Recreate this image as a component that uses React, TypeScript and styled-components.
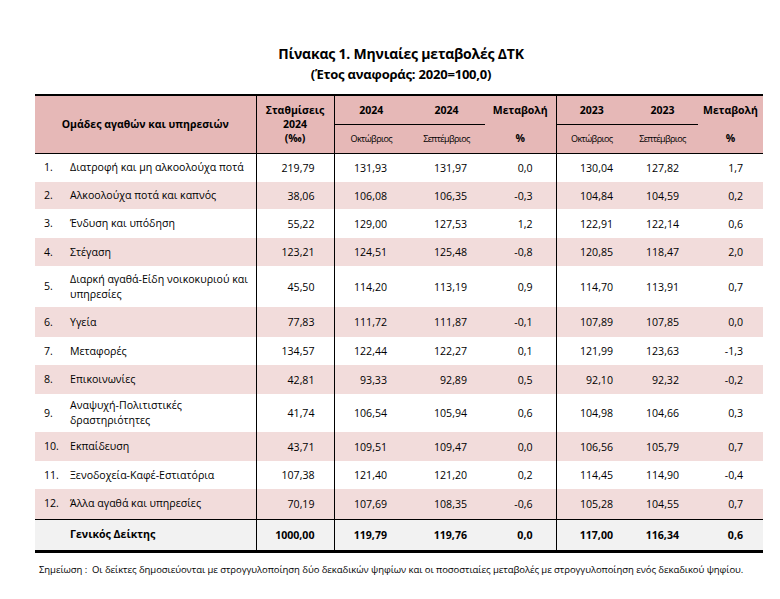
import React from "react";
import styled, { createGlobalStyle } from "styled-components";

const Global = createGlobalStyle`
  html, body { margin: 0; padding: 0; background: #fff; }
  body { font-family: "Open Sans", "Noto Sans", sans-serif; color: #000; }
`;

const Page = styled.div`
  width: 780px;
  height: 599px;
  display: flex;
  flex-direction: column;
  padding-top: 45px;
  box-sizing: border-box;
`;

const TitleBlock = styled.div`
  display: flex;
  flex-direction: column;
  align-items: center;
  gap: 3px;
  padding-left: 22px;
  margin-bottom: 11px;
`;

const Title = styled.h1`
  margin: 0;
  font-size: 14px;
  line-height: 18px;
  font-weight: 700;
  letter-spacing: -0.2px;
`;

const Subtitle = styled.h2`
  margin: 0;
  font-size: 13px;
  line-height: 17px;
  font-weight: 700;
  letter-spacing: -0.2px;
`;

const Table = styled.table`
  margin-left: 35px;
  width: 728px;
  border-collapse: collapse;
  table-layout: fixed;
  border-top: 2px solid #000;
  border-bottom: 3px solid #000;
  font-size: 10.6px;
`;

const HeadRow = styled.tr`
  background: #e6b8b7;
  height: 29px;
`;

const HeadCell = styled.th<{ $right?: boolean; $under?: boolean; $bottom?: boolean }>`
  padding: 0;
  font-weight: 700;
  font-size: 10.5px;
  line-height: 14px;
  text-align: center;
  vertical-align: middle;
  border-right: ${(p) => (p.$right ? "1px solid #000" : "none")};
  border-bottom: ${(p) => (p.$under || p.$bottom ? "1px solid #000" : "none")};
`;

const MonthCell = styled.th<{ $right?: boolean }>`
  padding: 0;
  font-weight: 500;
  font-size: 9px;
  letter-spacing: -0.6px;
  text-align: center;
  vertical-align: middle;
  border-bottom: 1px solid #000;
  border-right: ${(p) => (p.$right ? "1px solid #000" : "none")};
`;

const Row = styled.tr<{ $tint: "pink" | "white" | "gray"; $h: number }>`
  height: ${(p) => p.$h}px;
  background: ${(p) =>
    p.$tint === "pink" ? "#f2dcdb" : p.$tint === "gray" ? "#f2f2f2" : "#ffffff"};
  font-weight: ${(p) => (p.$tint === "gray" ? 700 : 400)};
  border-top: ${(p) => (p.$tint === "gray" ? "1px solid #000" : "none")};
`;

const NameCell = styled.td`
  padding: 0 6px 0 9px;
  border-right: 1px solid #000;
  vertical-align: middle;
`;

const NameWrap = styled.div`
  display: flex;
  align-items: center;
  line-height: 15px;
`;

const Num = styled.span`
  flex: 0 0 26px;
`;

const Label = styled.span`
  flex: 1;
`;

const ValueCell = styled.td<{ $pad: number; $right?: boolean }>`
  padding: 0 ${(p) => p.$pad}px 0 0;
  text-align: right;
  vertical-align: middle;
  border-right: ${(p) => (p.$right ? "1px solid #000" : "none")};
`;

const Note = styled.p`
  margin: 10px 0 0 39px;
  font-size: 9.5px;
  letter-spacing: -0.06px;
`;

const pads = [19, 21, 18, 23, 14, 19, 20];

type R = { n: string; name: string; v: string[]; h: number };

const rows: R[] = [
  { n: "1.", name: "Διατροφή και μη αλκοολούχα ποτά", v: ["219,79", "131,93", "131,97", "0,0", "130,04", "127,82", "1,7"], h: 29 },
  { n: "2.", name: "Αλκοολούχα ποτά και καπνός", v: ["38,06", "106,08", "106,35", "-0,3", "104,84", "104,59", "0,2"], h: 27 },
  { n: "3.", name: "Ένδυση και υπόδηση", v: ["55,22", "129,00", "127,53", "1,2", "122,91", "122,14", "0,6"], h: 29 },
  { n: "4.", name: "Στέγαση", v: ["123,21", "124,51", "125,48", "-0,8", "120,85", "118,47", "2,0"], h: 28 },
  { n: "5.", name: "Διαρκή αγαθά-Είδη νοικοκυριού και υπηρεσίες", v: ["45,50", "114,20", "113,19", "0,9", "114,70", "113,91", "0,7"], h: 41 },
  { n: "6.", name: "Υγεία", v: ["77,83", "111,72", "111,87", "-0,1", "107,89", "107,85", "0,0"], h: 30 },
  { n: "7.", name: "Μεταφορές", v: ["134,57", "122,44", "122,27", "0,1", "121,99", "123,63", "-1,3"], h: 28 },
  { n: "8.", name: "Επικοινωνίες", v: ["42,81", "93,33", "92,89", "0,5", "92,10", "92,32", "-0,2"], h: 29 },
  { n: "9.", name: "Αναψυχή-Πολιτιστικές δραστηριότητες", v: ["41,74", "106,54", "105,94", "0,6", "104,98", "104,66", "0,3"], h: 38 },
  { n: "10.", name: "Εκπαίδευση", v: ["43,71", "109,51", "109,47", "0,0", "106,56", "105,79", "0,7"], h: 29 },
  { n: "11.", name: "Ξενοδοχεία-Καφέ-Εστιατόρια", v: ["107,38", "121,40", "121,20", "0,2", "114,45", "114,90", "-0,4"], h: 28 },
  { n: "12.", name: "Άλλα αγαθά και υπηρεσίες", v: ["70,19", "107,69", "108,35", "-0,6", "105,28", "104,55", "0,7"], h: 30 },
];

const total = ["1000,00", "119,79", "119,76", "0,0", "117,00", "116,34", "0,6"];

const widths = [221, 78, 74, 77, 71, 71, 71, 65];

const Values = ({ v }: { v: string[] }) => (
  <>
    {v.map((x, i) => (
      <ValueCell key={i} $pad={pads[i]} $right={i === 0 || i === 3}>
        {x}
      </ValueCell>
    ))}
  </>
);

export default function App() {
  return (
    <Page>
      <Global />
      <TitleBlock>
        <Title>Πίνακας 1. Μηνιαίες μεταβολές ΔΤΚ</Title>
        <Subtitle>(Έτος αναφοράς: 2020=100,0)</Subtitle>
      </TitleBlock>
      <Table>
        <colgroup>
          {widths.map((w, i) => (
            <col key={i} style={{ width: w }} />
          ))}
        </colgroup>
        <thead>
          <HeadRow>
            <HeadCell rowSpan={2} $right $bottom>
              Ομάδες αγαθών και υπηρεσιών
            </HeadCell>
            <HeadCell rowSpan={2} $right $bottom>
              Σταθμίσεις
              <br />
              2024
              <br />
              (‰)
            </HeadCell>
            <HeadCell $under>2024</HeadCell>
            <HeadCell $under>2024</HeadCell>
            <HeadCell $right>Μεταβολή</HeadCell>
            <HeadCell $under>2023</HeadCell>
            <HeadCell $under>2023</HeadCell>
            <HeadCell>Μεταβολή</HeadCell>
          </HeadRow>
          <HeadRow>
            <MonthCell>Οκτώβριος</MonthCell>
            <MonthCell>Σεπτέμβριος</MonthCell>
            <HeadCell $right $bottom>%</HeadCell>
            <MonthCell>Οκτώβριος</MonthCell>
            <MonthCell>Σεπτέμβριος</MonthCell>
            <HeadCell $bottom>%</HeadCell>
          </HeadRow>
        </thead>
        <tbody>
          {rows.map((r, i) => (
            <Row key={r.n} $tint={i % 2 === 1 ? "pink" : "white"} $h={r.h}>
              <NameCell>
                <NameWrap>
                  <Num>{r.n}</Num>
                  <Label>{r.name}</Label>
                </NameWrap>
              </NameCell>
              <Values v={r.v} />
            </Row>
          ))}
          <Row $tint="gray" $h={32}>
            <NameCell>
              <NameWrap>
                <Num />
                <Label>Γενικός Δείκτης</Label>
              </NameWrap>
            </NameCell>
            <Values v={total} />
          </Row>
        </tbody>
      </Table>
      <Note>
        Σημείωση :&nbsp; Οι δείκτες δημοσιεύονται με στρογγυλοποίηση δύο δεκαδικών ψηφίων και οι
        ποσοστιαίες μεταβολές με στρογγυλοποίηση ενός δεκαδικού ψηφίου.
      </Note>
    </Page>
  );
}
